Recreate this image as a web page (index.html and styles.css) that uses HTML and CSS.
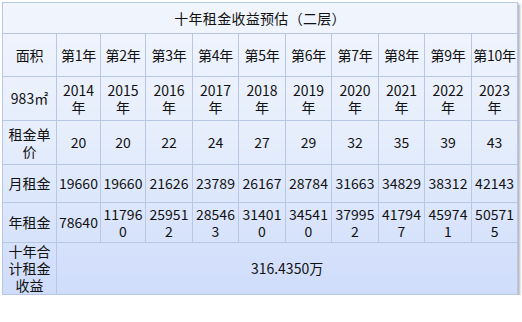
FILE: index.html
```html
<!DOCTYPE html>
<html>
<head>
<meta charset="utf-8">
<link rel="stylesheet" href="styles.css">
</head>
<body>
<table class="rent">
  <colgroup>
    <col class="c0"><col class="c44"><col class="c45"><col class="c47"><col class="c46"><col class="c47"><col class="c46"><col class="c47"><col class="c46"><col class="c47"><col class="c46">
  </colgroup>
  <tr class="r-title"><td colspan="11">十年租金收益预估（二层）</td></tr>
  <tr class="r-head"><td>面积</td><td>第1年</td><td>第2年</td><td>第3年</td><td>第4年</td><td>第5年</td><td>第6年</td><td>第7年</td><td>第8年</td><td>第9年</td><td>第10年</td></tr>
  <tr class="r-year"><td>983㎡</td><td>2014年</td><td>2015年</td><td>2016年</td><td>2017年</td><td>2018年</td><td>2019年</td><td>2020年</td><td>2021年</td><td>2022年</td><td>2023年</td></tr>
  <tr class="r-price"><td>租金单价</td><td>20</td><td>20</td><td>22</td><td>24</td><td>27</td><td>29</td><td>32</td><td>35</td><td>39</td><td>43</td></tr>
  <tr class="r-month"><td>月租金</td><td>19660</td><td>19660</td><td>21626</td><td>23789</td><td>26167</td><td>28784</td><td>31663</td><td>34829</td><td>38312</td><td>42143</td></tr>
  <tr class="r-annual"><td>年租金</td><td>78640</td><td>117960</td><td>259512</td><td>285463</td><td>314010</td><td>345410</td><td>379952</td><td>417947</td><td>459741</td><td>505715</td></tr>
  <tr class="r-total"><td>十年合计租金收益</td><td colspan="10">316.4350万</td></tr>
</table>
</body>
</html>
```
FILE: styles.css
```css
html, body {
  margin: 0;
  padding: 0;
  background: #ffffff;
}
body {
  padding: 2px 0 0 2px;
  font-family: "Noto Sans CJK SC", "Noto Sans", sans-serif;
  font-size: 14px;
  color: #111;
}
.rent {
  border-collapse: collapse;
  table-layout: fixed;
  width: 516px;
  background: linear-gradient(to bottom, #f1f5fd 0%, #e6eefc 45%, #cfdcfb 100%);
  border: 1px solid #a9bbd9;
  box-shadow: 2px 2px 2px rgba(90, 100, 120, 0.45);
}
.rent td {
  border: 1px solid #b8c8e4;
  text-align: center;
  vertical-align: middle;
  padding: 0 1px;
  line-height: 17px;
  word-break: break-all;
}
.c0 { width: 54px; }
.c44 { width: 44px; }
.c45 { width: 45px; }
.c46 { width: 46px; }
.c47 { width: 47px; }
.r-title td { height: 30px; padding-bottom: 1px; letter-spacing: 0.3px; }
.r-head td { height: 42px; white-space: nowrap; padding: 0; letter-spacing: -0.3px; }
.r-year td { height: 43px; }
.r-price td { height: 43px; }
.r-month td { height: 37px; }
.r-annual td { height: 39px; }
.r-total td { height: 50px; }
.rent tr td:first-child { padding: 0 5px; }
.r-title td:first-child { padding: 0; }
```
